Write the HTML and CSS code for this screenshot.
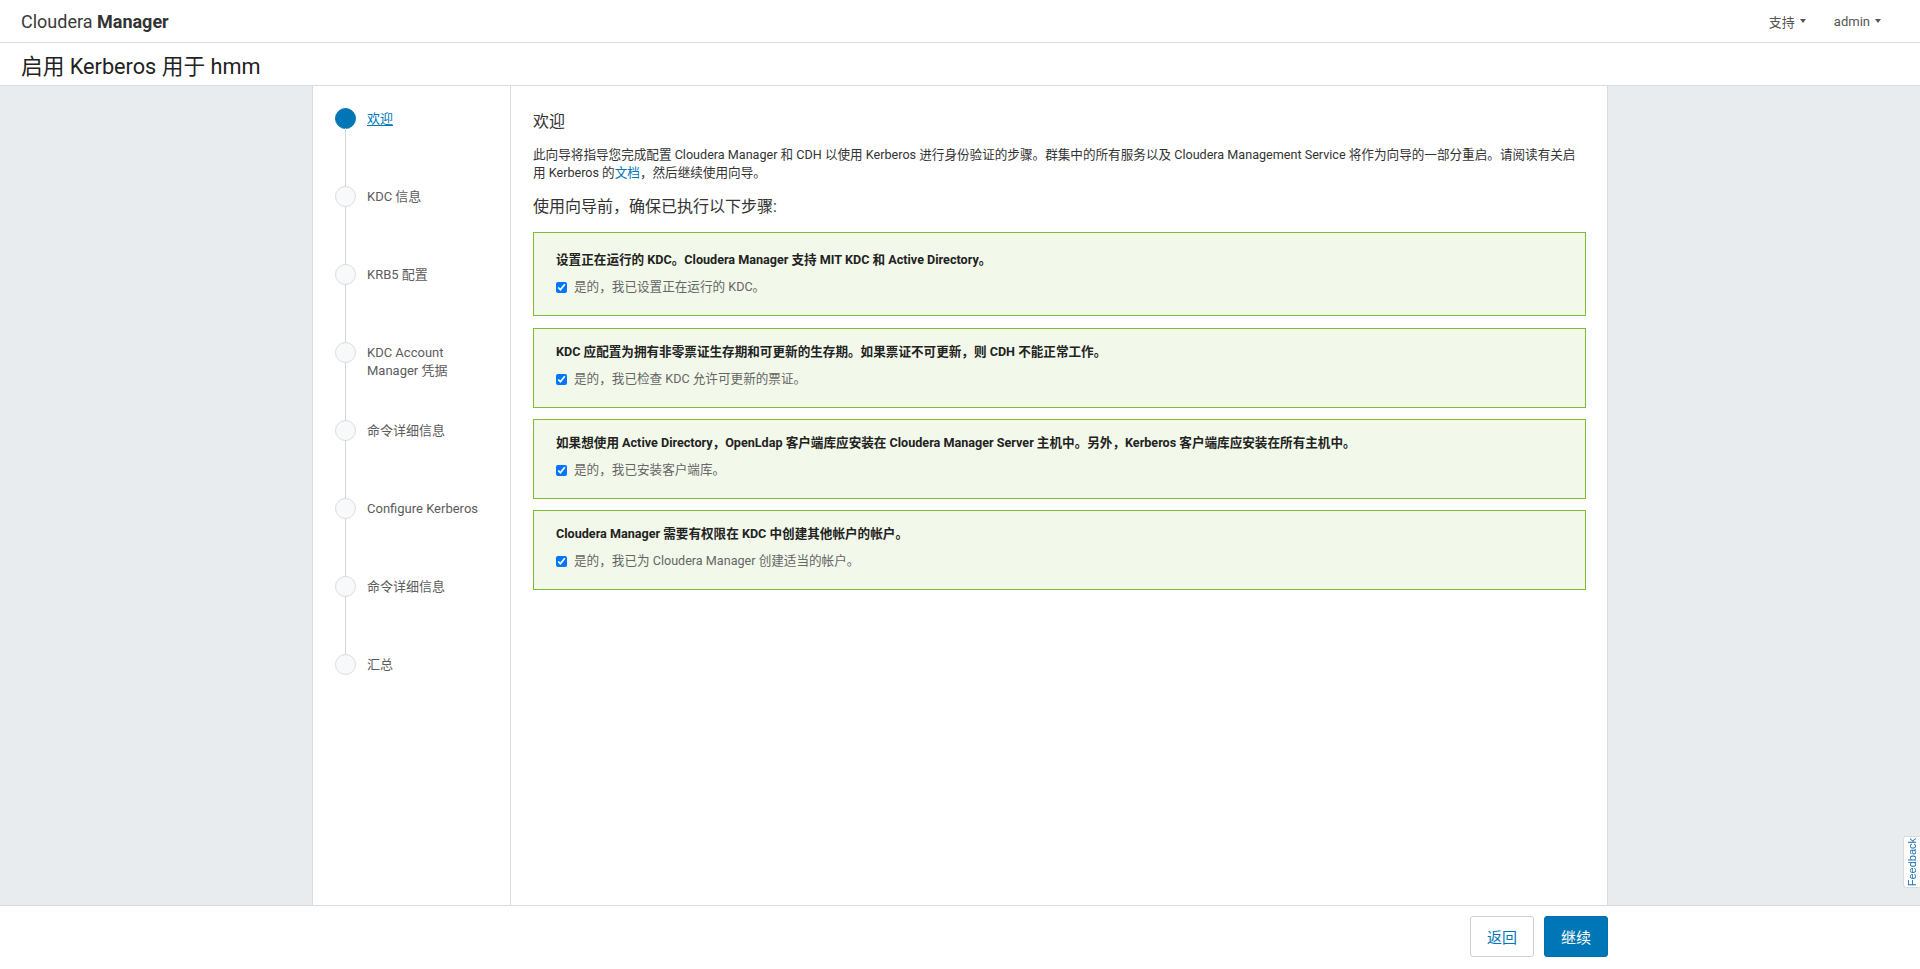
FILE: index.html
```html
<!DOCTYPE html>
<html lang="zh-CN">
<head>
<meta charset="utf-8">
<title>启用 Kerberos 用于 hmm</title>
<link rel="stylesheet" href="styles.css">
</head>
<body>
<header class="topbar">
  <div class="brand">Cloudera <b>Manager</b></div>
  <nav class="topnav">
    <span class="dd">支持<i class="caret"></i></span>
    <span class="dd">admin<i class="caret"></i></span>
  </nav>
</header>
<div class="titlebar"><h1>启用 Kerberos 用于 hmm</h1></div>
<div class="stage">
  <div class="wizard">
    <aside class="steps">
      <ol>
        <li class="step active"><span class="dot"></span><span class="label">欢迎</span></li>
        <li class="step"><span class="dot"></span><span class="label">KDC 信息</span></li>
        <li class="step"><span class="dot"></span><span class="label">KRB5 配置</span></li>
        <li class="step"><span class="dot"></span><span class="label">KDC Account Manager 凭据</span></li>
        <li class="step"><span class="dot"></span><span class="label">命令详细信息</span></li>
        <li class="step"><span class="dot"></span><span class="label">Configure Kerberos</span></li>
        <li class="step"><span class="dot"></span><span class="label">命令详细信息</span></li>
        <li class="step"><span class="dot"></span><span class="label">汇总</span></li>
      </ol>
    </aside>
    <main class="content">
      <h2 class="page-heading">欢迎</h2>
      <p class="intro">此向导将指导您完成配置 Cloudera Manager 和 CDH 以使用 Kerberos 进行身份验证的步骤。群集中的所有服务以及 Cloudera Management Service 将作为向导的一部分重启。请阅读有关启用 Kerberos 的<a href="#" class="link">文档</a>，然后继续使用向导。</p>
      <h3 class="sub-heading">使用向导前，确保已执行以下步骤:</h3>
      <div class="check-box first">
        <div class="check-title">设置正在运行的 KDC。Cloudera Manager 支持 MIT KDC 和 Active Directory。</div>
        <label class="check-row"><input type="checkbox" checked>是的，我已设置正在运行的 KDC。</label>
      </div>
      <div class="check-box">
        <div class="check-title">KDC 应配置为拥有非零票证生存期和可更新的生存期。如果票证不可更新，则 CDH 不能正常工作。</div>
        <label class="check-row"><input type="checkbox" checked>是的，我已检查 KDC 允许可更新的票证。</label>
      </div>
      <div class="check-box">
        <div class="check-title">如果想使用 Active Directory，OpenLdap 客户端库应安装在 Cloudera Manager Server 主机中。另外，Kerberos 客户端库应安装在所有主机中。</div>
        <label class="check-row"><input type="checkbox" checked>是的，我已安装客户端库。</label>
      </div>
      <div class="check-box">
        <div class="check-title">Cloudera Manager 需要有权限在 KDC 中创建其他帐户的帐户。</div>
        <label class="check-row"><input type="checkbox" checked>是的，我已为 Cloudera Manager 创建适当的帐户。</label>
      </div>
    </main>
  </div>
  <a href="#" class="feedback"><span>Feedback</span></a>
</div>
<footer class="footer">
  <div class="footer-inner">
    <button class="btn btn-default">返回</button>
    <button class="btn btn-primary">继续</button>
  </div>
</footer>
</body>
</html>
```
FILE: styles.css
```css
* { box-sizing: border-box; }
html, body { height: 100%; }
body {
  margin: 0;
  font-family: Roboto, "Noto Sans CJK SC", sans-serif;
  font-size: 13px;
  color: #333;
  background: #fff;
  display: flex;
  flex-direction: column;
  min-height: 969px;
}
.topbar {
  height: 43px;
  flex: none;
  border-bottom: 1px solid #dcdcdc;
  display: flex;
  align-items: center;
  justify-content: space-between;
  padding: 0 39px 0 21px;
}
.brand {
  font-size: 18px;
  color: #3a3a3a;
}
.brand b { font-weight: 700; color: #333; }
.topnav { display: flex; gap: 28px; align-items: center; }
.dd {
  font-size: 13px;
  color: #555;
  display: flex;
  align-items: center;
  gap: 5px;
}
.caret {
  display: inline-block;
  width: 0; height: 0;
  border-left: 3.5px solid transparent;
  border-right: 3.5px solid transparent;
  border-top: 4px solid #555;
}
.titlebar {
  height: 43px;
  flex: none;
  border-bottom: 1px solid #dcdcdc;
  display: flex;
  align-items: center;
  padding: 0 21px;
}
.titlebar h1 {
  margin: 0;
  font-size: 21.7px;
  font-weight: 400;
  color: #222;
}
.stage {
  flex: 1;
  background: #e9ecef;
  display: flex;
  justify-content: center;
}
.wizard {
  width: 1296px;
  background: #fff;
  border-left: 1px solid #d9dcdf;
  border-right: 1px solid #d9dcdf;
  display: flex;
}
.steps {
  width: 198px;
  flex: none;
  border-right: 1px solid #d9dcdf;
  padding: 22px 25px 0 22px;
}
.steps ol { list-style: none; margin: 0; padding: 0; }
.step {
  position: relative;
  height: 78px;
  display: flex;
  align-items: flex-start;
  gap: 11px;
}
.step:not(:last-child)::after {
  content: "";
  position: absolute;
  left: 10px;
  top: 20px;
  width: 1px;
  height: 59px;
  background: #d6d6d6;
}
.dot {
  width: 21px; height: 21px;
  flex: none;
  border-radius: 50%;
  border: 1px solid #dcdcdc;
  background: #f8f9fb;
}
.step.active .dot { background: #0076b6; border-color: #0076b6; }
.label {
  padding-top: 1.5px;
  line-height: 18px;
  font-size: 13px;
  color: #5c5c5c;
}
.step.active .label { color: #0076b6; text-decoration: underline; text-underline-offset: 2px; }
.content {
  flex: 1;
  padding: 26px 21px 0 22px;
}
.page-heading {
  margin: 0 0 14px;
  font-size: 16px;
  line-height: 20px;
  font-weight: 400;
  color: #333;
}
.intro {
  margin: 0;
  line-height: 18px;
  font-size: 12.6px;
  color: #333;
}
.link { color: #0076b6; text-decoration: none; }
.sub-heading {
  margin: 15px 0 15px;
  font-size: 16px;
  line-height: 20px;
  font-weight: 400;
  color: #333;
}
.check-box {
  border: 1px solid #80bc2f;
  background: #f3f9ea;
  padding: 15px 22px 20px;
  margin-bottom: 11px;
}
.check-box.first { padding-top: 19px; margin-bottom: 12px; }
.check-title {
  font-weight: 700;
  font-size: 12.6px;
  line-height: 16px;
  color: #222;
  margin-bottom: 11px;
}
.check-row {
  display: flex;
  align-items: center;
  line-height: 16px;
  font-size: 12.6px;
  color: #666;
}
.check-row input {
  width: 11px; height: 11px;
  margin: 0 7px 0 0;
  accent-color: #0075ff;
}
.feedback {
  position: fixed;
  right: 0;
  top: 836px;
  width: 17px;
  height: 52px;
  background: #fff;
  border: 1px solid #d9dcdf;
  border-right: none;
  border-radius: 3px 0 0 3px;
  display: flex;
  align-items: center;
  justify-content: center;
  text-decoration: none;
}
.feedback span {
  writing-mode: vertical-rl;
  transform: rotate(180deg);
  font-size: 11px;
  color: #1d6fb8;
  font-family: "Liberation Sans", sans-serif;
}
.footer {
  flex: none;
  height: 64px;
  border-top: 1px solid #dcdcdc;
  background: #fff;
  display: flex;
  justify-content: center;
  padding-top: 10px;
}
.footer-inner {
  width: 1296px;
  display: flex;
  justify-content: flex-end;
  gap: 10px;
}
.btn {
  height: 41px;
  padding: 0 16px;
  font-family: Roboto, "Noto Sans CJK SC", sans-serif;
  font-size: 15px;
  border-radius: 3px;
  cursor: pointer;
}
.btn-default { background: #fff; border: 1px solid #ccd0d4; color: #0076b6; }
.btn-primary { background: #0076b6; border: 1px solid #0070ad; color: #fff; }
```
